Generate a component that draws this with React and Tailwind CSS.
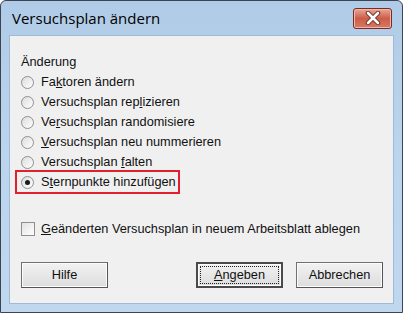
import React, { useState } from "react";

const options = [
  { pre: "Fa", u: "k", post: "toren ändern" },
  { pre: "Versuchsplan rep", u: "l", post: "izieren" },
  { pre: "Ve", u: "r", post: "suchsplan randomisiere" },
  { pre: "", u: "V", post: "ersuchsplan neu nummerieren" },
  { pre: "Versuchsplan ", u: "f", post: "alten" },
  { pre: "S", u: "t", post: "ernpunkte hinzufügen" },
];

const Radio = ({ checked }) => (
  <span className="relative flex h-[13px] w-[13px] items-center justify-center rounded-full border border-[#8e8f8f] bg-gradient-to-br from-[#dcdcdc] to-[#ffffff]">
    {checked && <span className="h-[5px] w-[5px] rounded-full bg-[#1a1a1a]" />}
  </span>
);

const Button = ({ children, focused }) => (
  <button
    className={
      focused
        ? "flex h-[26px] w-[87px] items-center justify-center border-2 border-[#4a4a4a] bg-gradient-to-b from-[#f2f2f2] to-[#dddddd] shadow-[inset_0_0_0_1px_#fcfcfc]"
        : "flex h-[26px] w-[87px] items-center justify-center border border-[#707070] border-b-[#555] border-r-[#555] bg-gradient-to-b from-[#f2f2f2] to-[#dddddd] shadow-[inset_0_0_0_1px_#fcfcfc]"
    }
  >
    {focused ? (
      <span className="flex h-[18px] w-[79px] items-center justify-center border border-dotted border-[#222]">
        {children}
      </span>
    ) : (
      children
    )}
  </button>
);

export default function App() {
  const [selected, setSelected] = useState(5);

  return (
    <div
      className="flex h-[313px] w-[403px] flex-col overflow-hidden rounded-t-[6px] border border-[#3b4450] bg-gradient-to-b from-[#b0cbe7] via-[#bcd5ee] to-[#bfd8f0] text-[12.75px] text-[#111]"
      style={{ fontFamily: '"Liberation Sans", Arial, sans-serif' }}
    >
      <div className="flex h-[34px] items-center justify-between pl-[11px] pr-[10px]">
        <span className="text-[15px] text-black" style={{ fontFamily: '"Open Sans", "Liberation Sans", sans-serif' }}>
          Versuchsplan ändern
        </span>
        <div className="flex h-[21px] w-[39px] items-center justify-center rounded-[3px] border border-[#7a2a22] bg-gradient-to-b from-[#e6a797] via-[#cc5c48] to-[#d77a64] shadow-[inset_0_0_0_1px_#f0b8a8]">
          <svg width="16" height="14" viewBox="0 0 16 14">
            <path d="M3 2 L13 12 M13 2 L3 12" stroke="#6b2a20" strokeWidth="4.5" strokeLinecap="round" />
            <path d="M3 2 L13 12 M13 2 L3 12" stroke="#ffffff" strokeWidth="2.6" strokeLinecap="round" />
          </svg>
        </div>
      </div>

      <div className="mx-[8px] mb-[8px] flex flex-1 flex-col border border-[#9fbad6] bg-[#f0f0f0] pl-[11px] pr-[10px] pt-[16px]">
        <div className="flex h-[20px] items-center">Änderung</div>
        {options.map((o, i) => {
          const row = (
            <div
              className="flex h-[20px] cursor-default items-center gap-[7px]"
              onClick={() => setSelected(i)}
            >
              <Radio checked={selected === i} />
              <span>
                {o.pre}
                <span className="underline">{o.u}</span>
                {o.post}
              </span>
            </div>
          );
          return i === 5 ? (
            <div key={i} className="-ml-[6px] -mt-[2px] w-[165px] border-2 border-[#e0202a] pl-[4px]">
              {row}
            </div>
          ) : (
            <div key={i}>{row}</div>
          );
        })}

        <div className="mt-[25px] flex h-[20px] items-center gap-[6px]">
          <span className="h-[14px] w-[14px] border border-[#8e8f8f] bg-gradient-to-br from-[#e2e2e2] to-[#ffffff]" />
          <span>
            <span className="underline">G</span>eänderten Versuchsplan in neuem Arbeitsblatt ablegen
          </span>
        </div>

        <div className="mt-[23px] flex items-center">
          <Button>Hilfe</Button>
          <div className="ml-auto flex gap-[13px]">
            <Button focused>
              <span>
                <span className="underline">A</span>ngeben
              </span>
            </Button>
            <Button>Abbrechen</Button>
          </div>
        </div>
      </div>
    </div>
  );
}
